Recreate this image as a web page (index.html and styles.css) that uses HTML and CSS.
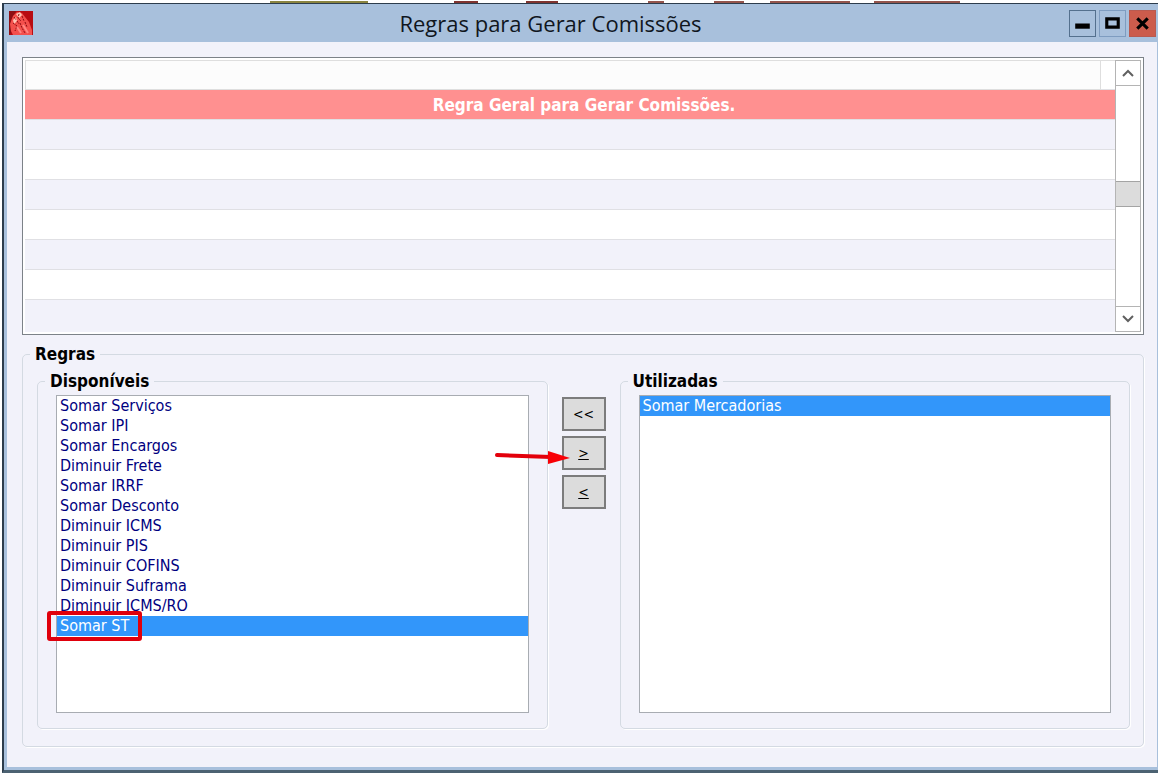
FILE: index.html
```html
<!DOCTYPE html>
<html lang="pt-BR">
<head>
    <meta charset="UTF-8">
    <meta name="viewport" content="width=device-width, initial-scale=1.0">
    <title>Regras para Gerar Comissões</title>
    <link rel="stylesheet" href="styles.css">
</head>
<body>
    <div class="window">
        <header class="titlebar">
            <svg class="app-icon" viewBox="0 0 24 24" aria-hidden="true">
                <rect width="24" height="24" fill="#b80c12"/>
                <path d="M0 0h7L2 9v13l-2 2z" fill="#8c1015"/>
                <path d="M1 13l3-8 4-4 5 1 3 4 4 5 3 8v5H4l-2-4z" fill="#f4504c"/>
                <path d="M7 3l4-2 2 3-3 3zM4 9l3-3 1 4-3 3z" fill="#ffc4b4"/>
                <path d="M5 6l2 3M10 3l-1 4 3 3M13 5l2 5M4 12l4 3-2 5M11 12l2 5 3 5M16 11l2 5M8 10l2 3" fill="none" stroke="#8a0a10" stroke-dasharray="2 1"/>
                <path d="M8 16l4 6M14 14l5 8" stroke="#ff8580" stroke-width="2"/>
            </svg>
            <h1>Regras para Gerar Comissões</h1>
            <div class="window-buttons">
                <button type="button" class="minimize" aria-label="Minimizar">
                    <svg viewBox="0 0 24 24"><path d="M5 12h14v5H5z"/></svg>
                </button>
                <button type="button" class="maximize" aria-label="Maximizar">
                    <svg viewBox="0 0 24 24"><path d="M5 6h14v11H5zM8 9v5h8V9z" fill-rule="evenodd"/></svg>
                </button>
                <button type="button" class="close" aria-label="Fechar">
                    <svg viewBox="0 0 24 24"><path d="M7 7l10 10M17 7L7 17" stroke="#000" stroke-width="3"/></svg>
                </button>
            </div>
        </header>
        <main class="content">
            <div class="grid-box">
                <table class="rules-table">
                    <thead>
                        <tr><th></th><td></td></tr>
                    </thead>
                    <tbody>
                        <tr class="selected"><td colspan="2">Regra Geral para Gerar Comissões.</td></tr>
                        <tr><td colspan="2"></td></tr>
                        <tr><td colspan="2"></td></tr>
                        <tr><td colspan="2"></td></tr>
                        <tr><td colspan="2"></td></tr>
                        <tr><td colspan="2"></td></tr>
                        <tr><td colspan="2"></td></tr>
                        <tr><td colspan="2"></td></tr>
                    </tbody>
                </table>
                <div class="scrollbar">
                    <button type="button" aria-label="Rolar para cima">
                        <svg viewBox="0 0 12 12"><path d="M1 9l5-5 5 5"/></svg>
                    </button>
                    <div class="track"><div class="thumb"></div></div>
                    <button type="button" aria-label="Rolar para baixo">
                        <svg viewBox="0 0 12 12"><path d="M1 3l5 5 5-5"/></svg>
                    </button>
                </div>
            </div>
            <fieldset class="rules">
                <legend>Regras</legend>
                <div class="columns">
                    <fieldset class="list-group">
                        <legend id="available-label">Disponíveis</legend>
                        <div class="list-wrap">
                            <select id="available" size="15" aria-labelledby="available-label">
                                <option>Somar Serviços</option>
                                <option>Somar IPI</option>
                                <option>Somar Encargos</option>
                                <option>Diminuir Frete</option>
                                <option>Somar IRRF</option>
                                <option>Somar Desconto</option>
                                <option>Diminuir ICMS</option>
                                <option>Diminuir PIS</option>
                                <option>Diminuir COFINS</option>
                                <option>Diminuir Suframa</option>
                                <option>Diminuir ICMS/RO</option>
                                <option selected>Somar ST</option>
                            </select>
                            <div class="mark"></div>
                        </div>
                    </fieldset>
                    <div class="move-buttons">
                        <button type="button" id="remove-all">&lt;&lt;</button>
                        <button type="button" id="add"><u>&gt;</u></button>
                        <button type="button" id="remove"><u>&lt;</u></button>
                        <svg class="arrow" viewBox="0 0 76 16" aria-hidden="true">
                            <path d="M3 5l54 2" stroke="#e3000b" stroke-width="4" stroke-linecap="round"/>
                            <path d="M54 1l22 7-22 6z" fill="#f80006"/>
                        </svg>
                    </div>
                    <fieldset class="list-group">
                        <legend id="used-label">Utilizadas</legend>
                        <div class="list-wrap">
                            <select id="used" size="15" aria-labelledby="used-label">
                                <option selected>Somar Mercadorias</option>
                            </select>
                        </div>
                    </fieldset>
                </div>
            </fieldset>
        </main>
    </div>
</body>
</html>
```
FILE: styles.css
```css
* {
    box-sizing: border-box;
}
body {
    margin: 0;
    padding: 3px 0 0 2px;
    min-height: 100vh;
    display: flex;
    font-family: 'DejaVu Sans Condensed', 'DejaVu Sans', sans-serif;
    font-size: 16px;
    color: #000;
    background:
        linear-gradient(#8a8440, #8a8440) 270px 1px / 98px 2px no-repeat,
        linear-gradient(#803430, #803430) 454px 1px / 24px 2px no-repeat,
        linear-gradient(#803430, #803430) 526px 1px / 32px 2px no-repeat,
        linear-gradient(#94544c, #94544c) 648px 1px / 16px 2px no-repeat,
        linear-gradient(#94544c, #94544c) 714px 1px / 30px 2px no-repeat,
        linear-gradient(#94544c, #94544c) 770px 1px / 80px 2px no-repeat,
        linear-gradient(#94544c, #94544c) 874px 1px / 86px 2px no-repeat,
        #fff;
}
.window {
    flex: 1;
    display: flex;
    flex-direction: column;
    background: #a8c0dc;
    border: 1px solid #2c3c4c;
    border-width: 1px 0 3px 2px;
    border-bottom-color: #4c6272;
}
.titlebar {
    display: grid;
    grid-template-columns: 1fr auto 1fr;
    align-items: center;
    height: 38px;
    padding: 0 2px 0 5px;
}
.titlebar h1 {
    margin: 0 64px 0 0;
    font-family: 'Open Sans', sans-serif;
    font-size: 22px;
    font-weight: normal;
    color: #10161e;
}
.app-icon {
    width: 24px;
    height: 24px;
}
.window-buttons {
    display: flex;
    justify-content: flex-end;
    gap: 3px;
}
.window-buttons button {
    width: 27px;
    height: 27px;
    padding: 0;
    border: 1px solid #7e9cc0;
    background: #a8c0dc;
}
.window-buttons .minimize {
    border-color: #54708e;
}
.window-buttons .close {
    background: #cc5c4c;
    border-color: #b85a50;
}
.window-buttons svg {
    display: block;
    width: 100%;
    height: 100%;
}
.content {
    flex: 1;
    display: flex;
    flex-direction: column;
    margin: 0 1px 3px 3px;
    padding: 15px 13px 20px 15px;
    background: #f2f2fa;
}
.grid-box {
    display: flex;
    padding: 2px;
    border: 1px solid #7c8288;
    background: #fff;
}
.rules-table {
    flex: 1;
    border-collapse: separate;
    border-spacing: 0;
}
.rules-table th, .rules-table td {
    height: 30px;
    padding: 0;
    border-bottom: 1px solid #e0e0e4;
}
.rules-table th {
    border: 1px solid #dedede;
    background: #fcfcfc;
}
.rules-table thead td {
    width: 14px;
    border-top: 1px solid #dedede;
}
.rules-table tbody tr:nth-child(even) {
    background: #f2f2fa;
}
.rules-table .selected td {
    padding-left: 28px;
    background: #ff9090;
    color: #fff;
    font-size: 17px;
    line-height: 20px;
    font-weight: bold;
    text-align: center;
}
.rules-table tbody tr:last-child td {
    height: 32px;
    border-bottom: none;
}
.scrollbar {
    display: flex;
    flex-direction: column;
    width: 26px;
    border: 1px solid #b4b4b4;
}
.scrollbar button {
    height: 24px;
    padding: 0;
    border: none;
    background: #fff;
}
.scrollbar svg {
    display: block;
    width: 12px;
    height: 12px;
    margin: 0 auto;
    fill: none;
    stroke: #606060;
    stroke-width: 2;
}
.track {
    flex: 1;
    padding-top: 95px;
    border: 1px solid #b4b4b4;
    border-width: 1px 0;
}
.thumb {
    height: 26px;
    background: #dcdcdc;
    border: 1px solid #a4a4a4;
    border-width: 1px 0;
}
fieldset {
    min-width: 0;
    margin: 0;
    padding: 0;
    border: 1px solid #d4dae2;
    border-radius: 5px;
    box-shadow: 1px 1px 0 #fff;
}
legend {
    padding: 0 5px;
    font-size: 17px;
    line-height: 20px;
    font-weight: bold;
    background: #f2f2fa;
}
.rules {
    flex: 1;
    display: flex;
    flex-direction: column;
    margin-top: 9px;
    padding: 7px 13px 17px 14px;
}
.rules > legend {
    margin-left: -7px;
}
.columns {
    flex: 1;
    display: flex;
    height: 100%;
}
.list-group {
    flex: 1;
    display: flex;
    flex-direction: column;
    padding: 4px 18px 15px;
}
.list-group > legend {
    margin-left: -11px;
}
.list-wrap {
    flex: 1;
    display: flex;
    position: relative;
    height: 100%;
}
.list-wrap select {
    flex: 1;
    min-width: 0;
    height: 100%;
    padding: 0;
    border: 1px solid #a8acb2;
    border-radius: 0;
    outline: none;
    appearance: none;
    overflow: hidden;
    background: #fff;
    font: inherit;
    color: #000080;
}
.list-wrap option {
    height: 20px;
    min-height: 20px;
    padding: 0 3px;
}
.list-wrap option:checked {
    color: #fff;
    background: #3296fa;
}
.mark {
    position: absolute;
    top: 216px;
    left: -9px;
    width: 95px;
    height: 30px;
    border: 4px solid #e0000c;
    border-radius: 3px;
}
.move-buttons {
    position: relative;
    display: flex;
    flex-direction: column;
    gap: 5px;
    padding: 26px 14px 0;
}
.move-buttons button {
    width: 44px;
    height: 34px;
    padding: 0;
    border: 2px solid #7c7c7c;
    background: #dcdcdc;
    font-family: inherit;
    font-size: 14px;
}
.arrow {
    position: absolute;
    top: 79px;
    right: 50px;
    width: 76px;
    height: 16px;
}
```
